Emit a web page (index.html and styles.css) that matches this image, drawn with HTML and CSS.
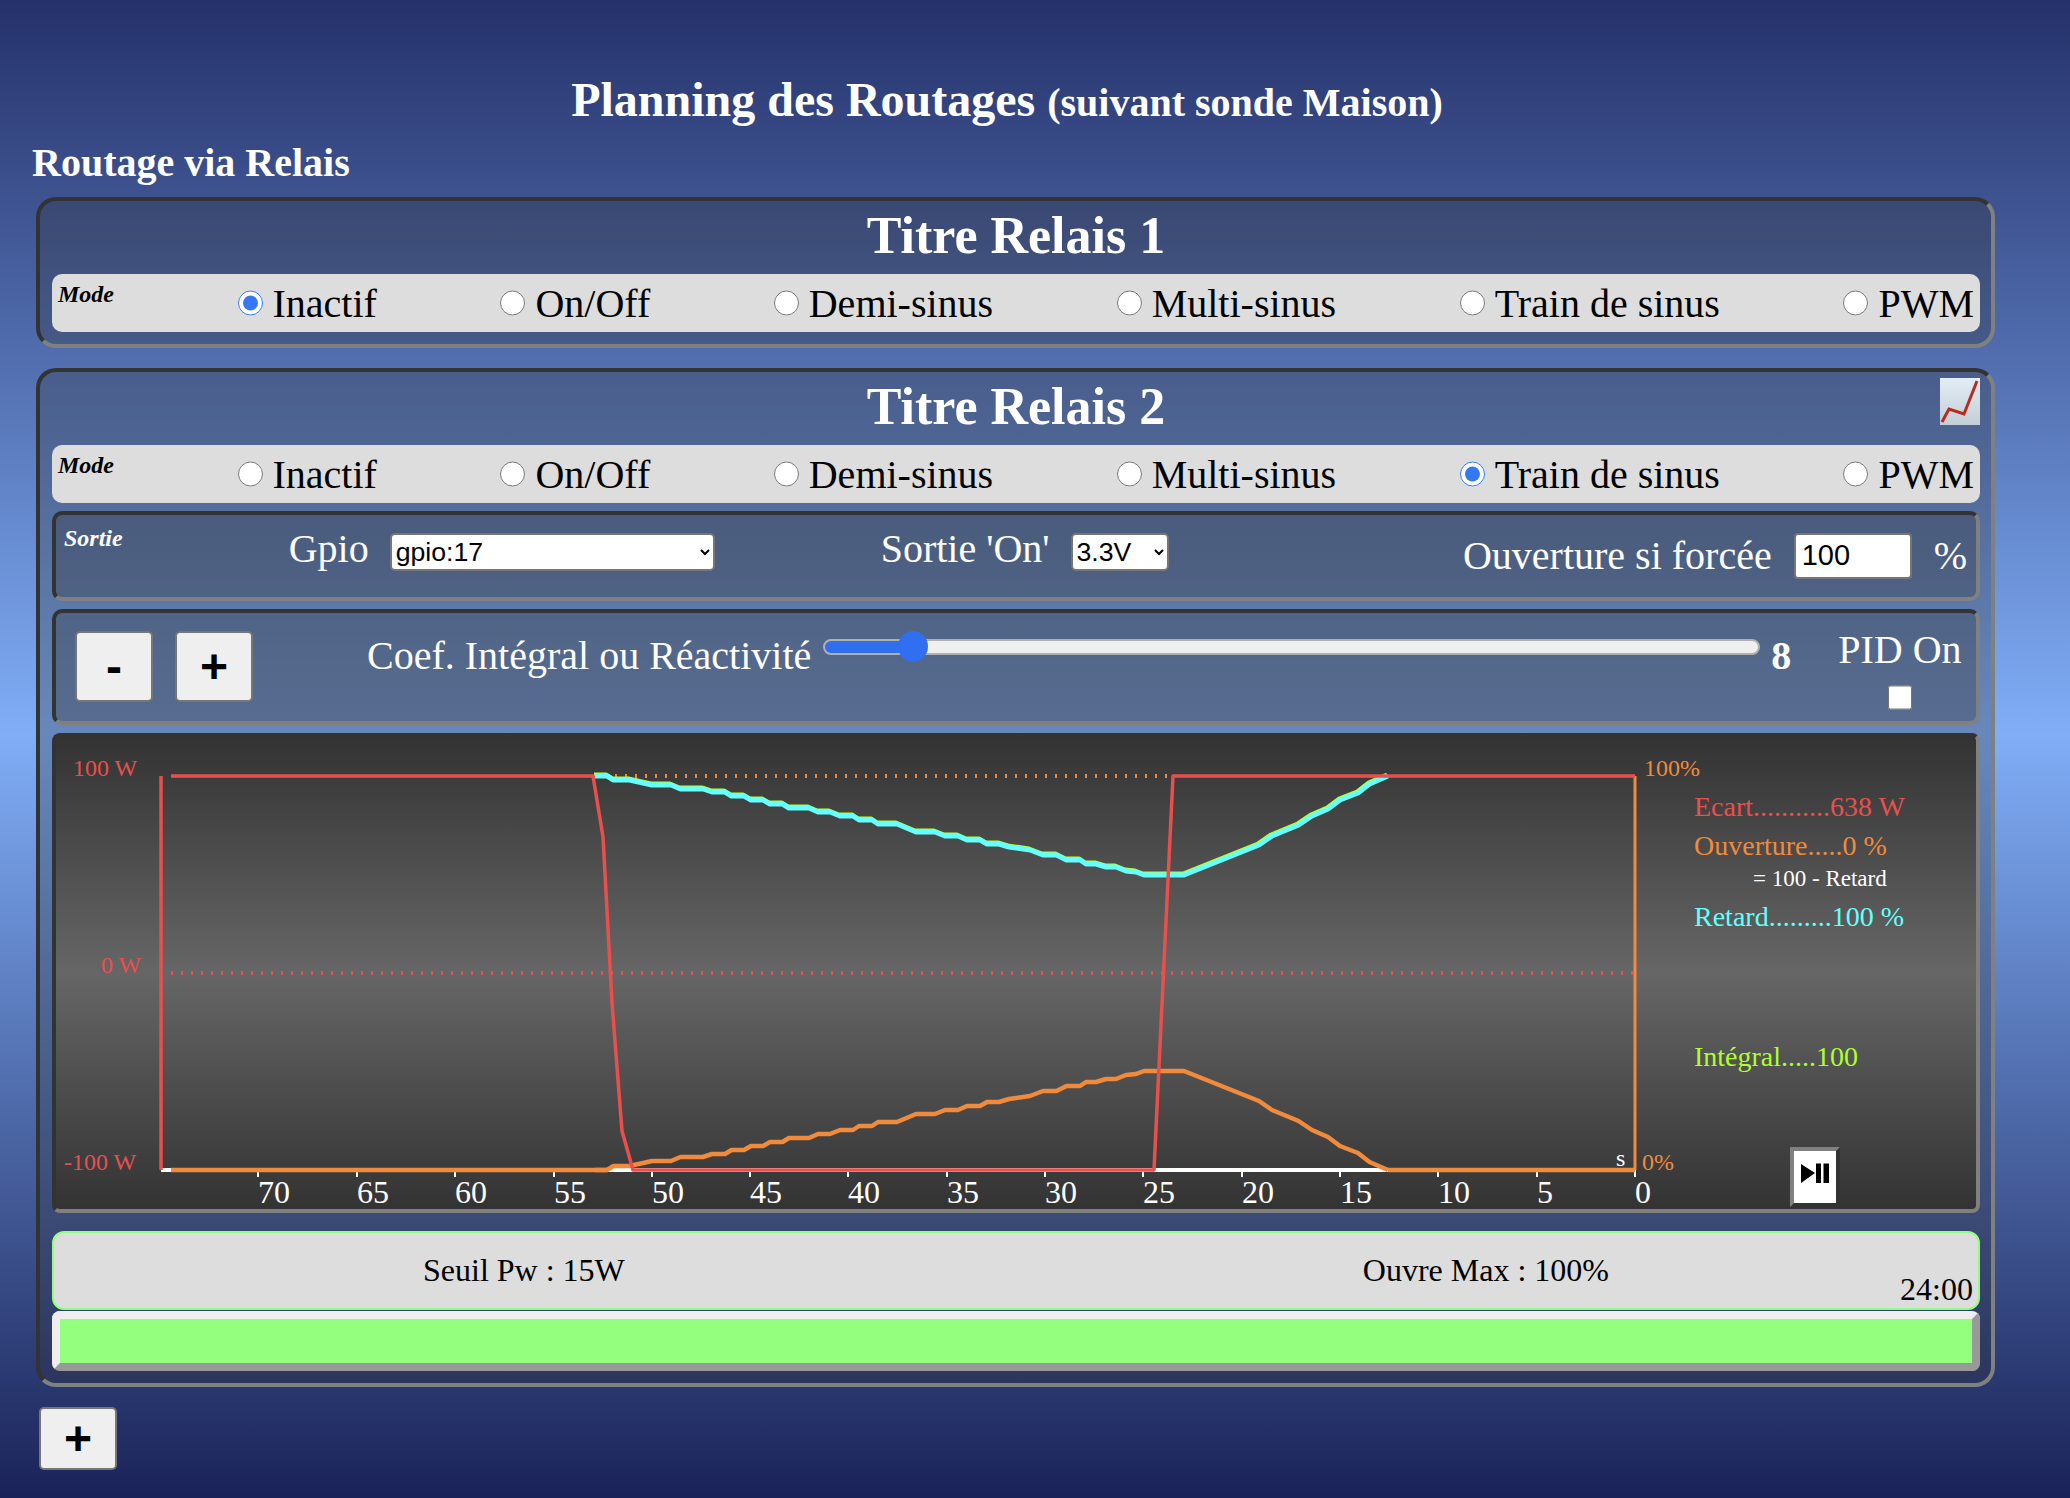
FILE: index.html
```html
<!DOCTYPE html>
<html lang="fr">
<head>
    <meta charset="UTF-8">
    <meta name="viewport" content="width=device-width, initial-scale=1.0">
    <title>Planning des Routages</title>
    <link rel="stylesheet" href="styles.css">
</head>
<body>
    <h1 class="page-title">Planning des Routages <small>(suivant sonde Maison)</small></h1>
    <h2 class="section-title">Routage via Relais</h2>

    <div class="relais">
        <h3 class="relais-title">Titre Relais 1</h3>
        <div class="mode-row">
            <span class="tag">Mode</span>
            <label><input type="radio" name="mode1" checked>Inactif</label>
            <label><input type="radio" name="mode1">On/Off</label>
            <label><input type="radio" name="mode1">Demi-sinus</label>
            <label><input type="radio" name="mode1">Multi-sinus</label>
            <label><input type="radio" name="mode1">Train de sinus</label>
            <label><input type="radio" name="mode1">PWM</label>
        </div>
    </div>

    <div class="relais relais-open">
        <svg class="histo-icon" viewBox="0 0 40 47">
            <defs>
                <linearGradient id="iconbg" x1="0" y1="0" x2="0" y2="1">
                    <stop offset="0" stop-color="#e2edf5"/>
                    <stop offset="1" stop-color="#c3ced6"/>
                </linearGradient>
            </defs>
            <rect width="40" height="47" fill="url(#iconbg)"/>
            <polyline points="2,44 9,31 24,36 37,3" fill="none" stroke="#b92a1f" stroke-width="3"/>
        </svg>
        <h3 class="relais-title">Titre Relais 2</h3>
        <div class="mode-row">
            <span class="tag">Mode</span>
            <label><input type="radio" name="mode2">Inactif</label>
            <label><input type="radio" name="mode2">On/Off</label>
            <label><input type="radio" name="mode2">Demi-sinus</label>
            <label><input type="radio" name="mode2">Multi-sinus</label>
            <label><input type="radio" name="mode2" checked>Train de sinus</label>
            <label><input type="radio" name="mode2">PWM</label>
        </div>

        <div class="sub sortie">
            <span class="tag">Sortie</span>
            <div class="field">Gpio <select class="sel-gpio"><option>gpio:17</option></select></div>
            <div class="field">Sortie 'On' <select class="sel-volt"><option>3.3V</option></select></div>
            <div class="field field-force">Ouverture si forcée <input class="num" type="text" value="100"> %</div>
        </div>

        <div class="sub coef">
            <button class="btn btn-moins">-</button>
            <button class="btn">+</button>
            <span class="coef-label">Coef. Intégral ou Réactivité</span>
            <input class="slider" type="range" min="0" max="100" value="8">
            <b class="coef-val">8</b>
            <div class="pid">
                <span>PID On</span>
                <input type="checkbox">
            </div>
        </div>

        <div class="chart">
            <svg class="chart-svg" viewBox="56 734 1920 472">
                <defs>
                    <polyline id="curve" points="595,1167 607,1167 613.5,1163 629.5,1163 652,1158 671,1158 680.5,1154 703,1154 712,1151 725,1151 731.5,1147 744,1147 751,1143 763,1143 770,1139 782.5,1139 789,1135 809,1135 818,1131 830,1131 840,1127 853,1127 859,1123 872,1123 878,1119 897,1119 916,1111 935,1111 945,1107 958,1107 967,1103 980,1103 987,1099 999,1099 1009,1096 1030,1093 1043,1088 1056.5,1088 1066.5,1083 1080,1083 1086,1079 1096,1079 1106,1076 1116,1076 1126,1072 1136,1071 1144,1068 1184,1068 1259,1098 1272,1107 1298.6,1118 1312,1127 1328,1134 1340,1143 1358,1150 1369.5,1159 1388,1167"/>
                </defs>

                <line class="dots-orange" x1="595" y1="773" x2="1173" y2="773"/>
                <line class="dots-red" x1="171" y1="970" x2="1635" y2="970"/>
                <line class="axis" x1="161" y1="1167" x2="1635" y2="1167"/>
                <path class="ticks" d="M258 1167v7M357 1167v7M455 1167v7M554 1167v7M652 1167v7M750 1167v7M848 1167v7M947 1167v7M1045 1167v7M1143 1167v7M1242 1167v7M1340 1167v7M1438 1167v7M1537 1167v7M1635 1167v7"/>

                <use class="line line-integral" href="#curve" transform="translate(-1,1938.5) scale(1,-1)"/>
                <use class="line line-retard" href="#curve" transform="translate(0,1940) scale(1,-1)"/>
                <use class="line line-ouv" href="#curve"/>
                <line class="line line-ouv" x1="171" y1="1167" x2="607" y2="1167"/>
                <line class="line line-ouv" x1="1388" y1="1167" x2="1635" y2="1167"/>
                <line class="line line-ouv-v" x1="1635" y1="773" x2="1635" y2="1167"/>

                <path class="line line-ecart" d="M161 1167V773M171 773H593L603 834L612 1000L622 1128L633 1167H1154L1173 773H1635"/>

                <text class="lbl red" x="73" y="773">100 W</text>
                <text class="lbl red" x="101" y="970">0 W</text>
                <text class="lbl red" x="64" y="1167">-100 W</text>
                <text class="lbl orange" x="1644" y="773">100%</text>
                <text class="lbl orange" x="1642" y="1167">0%</text>
                <text class="lbl white" x="1616" y="1163">s</text>

                <text class="tick" x="258" y="1200">70</text>
                <text class="tick" x="357" y="1200">65</text>
                <text class="tick" x="455" y="1200">60</text>
                <text class="tick" x="554" y="1200">55</text>
                <text class="tick" x="652" y="1200">50</text>
                <text class="tick" x="750" y="1200">45</text>
                <text class="tick" x="848" y="1200">40</text>
                <text class="tick" x="947" y="1200">35</text>
                <text class="tick" x="1045" y="1200">30</text>
                <text class="tick" x="1143" y="1200">25</text>
                <text class="tick" x="1242" y="1200">20</text>
                <text class="tick" x="1340" y="1200">15</text>
                <text class="tick" x="1438" y="1200">10</text>
                <text class="tick" x="1537" y="1200">5</text>
                <text class="tick" x="1635" y="1200">0</text>

                <text class="val red" x="1694" y="813">Ecart...........638 W</text>
                <text class="val orange" x="1694" y="852">Ouverture.....0 %</text>
                <text class="note" x="1753" y="883">= 100 - Retard</text>
                <text class="val cyan" x="1694" y="923">Retard.........100 %</text>
                <text class="val lime" x="1694" y="1063">Intégral.....100</text>
            </svg>
            <button class="play">
                <svg viewBox="0 0 42 52" width="42" height="52">
                    <path d="M7 13V32L21 22Z M22 12.5H27V32H22Z M29.5 12.5H35V32H29.5Z"/>
                </svg>
            </button>
        </div>

        <div class="params">
            <span class="p-seuil">Seuil Pw : 15W</span>
            <span class="p-ouvre">Ouvre Max : 100%</span>
            <span class="p-heure">24:00</span>
        </div>
        <div class="jauge"><div class="jauge-fill"></div></div>
    </div>

    <button class="btn btn-add">+</button>
</body>
</html>
```

FILE: styles.css
```css
* {
    box-sizing: border-box;
}

html {
    height: 100%;
}

body {
    margin: 0;
    height: 1498px;
    overflow: hidden;
    padding-top: 72px;
    font-family: "Liberation Serif", "Times New Roman", serif;
    font-size: 40px;
    color: white;
    background: linear-gradient(#25316a 0, #80aef7 49%, #1a2358 100%);
}

.page-title {
    margin: 0;
    padding-right: 56px;
    text-align: center;
    font-size: 48px;
    line-height: 55px;
}

.page-title small {
    font-size: 40px;
}

.section-title {
    margin: 0 0 0 32px;
    font-size: 40px;
    line-height: 46px;
    padding-top: 10px;
    height: 67px;
}

.relais {
    position: relative;
    width: 1959px;
    margin-left: 36px;
    margin-bottom: 20px;
    padding: 0 11px 12px 12px;
    border: 4px solid;
    border-color: #333 #808080 #808080 #333;
    border-radius: 20px;
    background: rgba(51, 51, 51, 0.3);
}

.relais-title {
    margin: 0;
    height: 73px;
    font-size: 52px;
    line-height: 69px;
    text-align: center;
}

.histo-icon {
    position: absolute;
    top: 6px;
    right: 11px;
    width: 40px;
    height: 47px;
}

.tag {
    font-size: 24px;
    font-weight: bold;
    font-style: italic;
    line-height: 27px;
}

.mode-row {
    display: flex;
    justify-content: space-between;
    align-items: center;
    height: 58px;
    padding: 0 6px;
    color: black;
    background: #ddd;
    border-radius: 10px;
}

.mode-row .tag {
    align-self: flex-start;
    margin-top: 7px;
}

.mode-row label {
    display: flex;
    align-items: center;
}

.mode-row input {
    width: 25px;
    height: 26px;
    margin: 0 10px 0 0;
    accent-color: #3478f6;
}

.sub {
    margin-top: 8px;
    border: 4px solid;
    border-color: #333 #808080 #808080 #333;
    border-radius: 10px;
    background: rgba(51, 51, 51, 0.3);
}

.sortie {
    display: flex;
    gap: 166px;
    height: 90px;
    padding: 10px 9px 0 8px;
    align-items: flex-start;
}

.field {
    display: flex;
    align-items: center;
    gap: 11px;
    margin-top: 0;
    white-space: pre;
}

.field-force {
    margin-left: auto;
    margin-top: 7px;
    gap: 12px;
}

select {
    height: 38px;
    font-family: "Liberation Sans", Arial, sans-serif;
    font-size: 26.67px;
    background: white;
    color: black;
    border: 2px solid #767676;
    border-radius: 5px;
    margin-top: 6px;
}

.sel-gpio {
    width: 325px;
}

.sel-volt {
    width: 98px;
}

.num {
    width: 118px;
    height: 46px;
    padding: 0 6px;
    font-family: "Liberation Sans", Arial, sans-serif;
    font-size: 29px;
    border: 2px solid #767676;
    border-radius: 4px;
}

.coef {
    position: relative;
    display: flex;
    align-items: flex-start;
    height: 116px;
    padding: 18px 0 0 19px;
}

.btn {
    width: 78px;
    height: 71px;
    padding: 0;
    font-family: "Liberation Sans", Arial, sans-serif;
    font-size: 48px;
    font-weight: bold;
    color: black;
    background: #efefef;
    border: 2px solid #767676;
    border-radius: 5px;
}

.btn-moins {
    margin-right: 22px;
}

.coef-label {
    margin-left: 114px;
    margin-top: 1px;
}

.slider {
    appearance: none;
    -webkit-appearance: none;
    width: 937px;
    height: 31px;
    margin: 0 0 0 12px;
    background: none;
}

.slider::-webkit-slider-runnable-track {
    height: 16px;
    border: 2px solid #b0b0b0;
    border-radius: 8px;
    background: linear-gradient(90deg, #2f6ff0 9.3%, #efefef 9.3%);
}

.slider::-webkit-slider-thumb {
    -webkit-appearance: none;
    width: 30px;
    height: 31px;
    margin-top: -9.5px;
    border-radius: 50%;
    background: #2f6ff0;
}

.coef-val {
    margin-left: 11px;
    margin-top: 1px;
}

.pid {
    display: flex;
    flex-direction: column;
    align-items: center;
    margin-left: 47px;
    margin-top: -5px;
}

.pid input {
    width: 24px;
    height: 25px;
    margin: 0;
    margin-top: 12px;
}

.chart {
    position: relative;
    height: 480px;
    margin-top: 8px;
    border: 4px solid;
    border-color: #333 #808080 #808080 #333;
    border-radius: 8px;
    background: linear-gradient(#333 0, #666 50%, #333 100%);
}

.chart-svg {
    display: block;
    width: 1920px;
    height: 472px;
}

.dots-orange {
    stroke: #f08a3c;
    stroke-width: 4;
    stroke-dasharray: 2 8;
}

.dots-red {
    stroke: #e8504d;
    stroke-width: 4;
    stroke-dasharray: 2 8;
}

.axis {
    stroke: white;
    stroke-width: 4;
}

.ticks {
    fill: none;
    stroke: white;
    stroke-width: 2;
}

.line {
    fill: none;
    stroke-width: 4;
    stroke-linejoin: round;
}

.line-integral {
    stroke: #adff2f;
}

.line-retard {
    stroke: #66ffff;
    stroke-width: 5;
}

.line-ouv {
    stroke: #f08a3c;
    stroke-width: 4.5;
}

.line-ouv-v {
    stroke: #f08a3c;
    stroke-width: 3;
}

.line-ecart {
    stroke: #e8504d;
    stroke-width: 3.5;
}

.lbl {
    font-size: 24px;
}

.tick {
    font-size: 32px;
    fill: white;
}

.val {
    font-size: 28px;
}

.note {
    font-size: 23px;
    fill: white;
}

.red {
    fill: #e8504d;
}

.orange {
    fill: #f08a3c;
}

.white {
    fill: white;
}

.cyan {
    fill: #66ffff;
}

.lime {
    fill: #adff2f;
}

.play {
    position: absolute;
    top: 410px;
    right: 136px;
    width: 50px;
    height: 60px;
    padding: 0;
    background: white;
    border: 4px solid;
    border-color: #808080 #333 #333 #808080;
}

.play svg {
    display: block;
}

.params {
    display: flex;
    align-items: center;
    height: 79px;
    margin-top: 18px;
    padding: 0 5px 0 369px;
    font-size: 32px;
    color: black;
    background: #ddd;
    border: 2px solid #90ff80;
    border-radius: 12px;
}

.p-ouvre {
    margin-left: 738px;
}

.p-heure {
    margin-left: auto;
    align-self: flex-end;
}

.jauge {
    height: 60px;
    margin-top: 1px;
    border: 8px solid;
    border-color: #eee #999 #999 #eee;
    border-radius: 8px;
}

.jauge-fill {
    height: 100%;
    background: #94ff7e;
}

.btn-add {
    display: block;
    margin: 10px 0 0 39px;
    height: 63px;
}
```
